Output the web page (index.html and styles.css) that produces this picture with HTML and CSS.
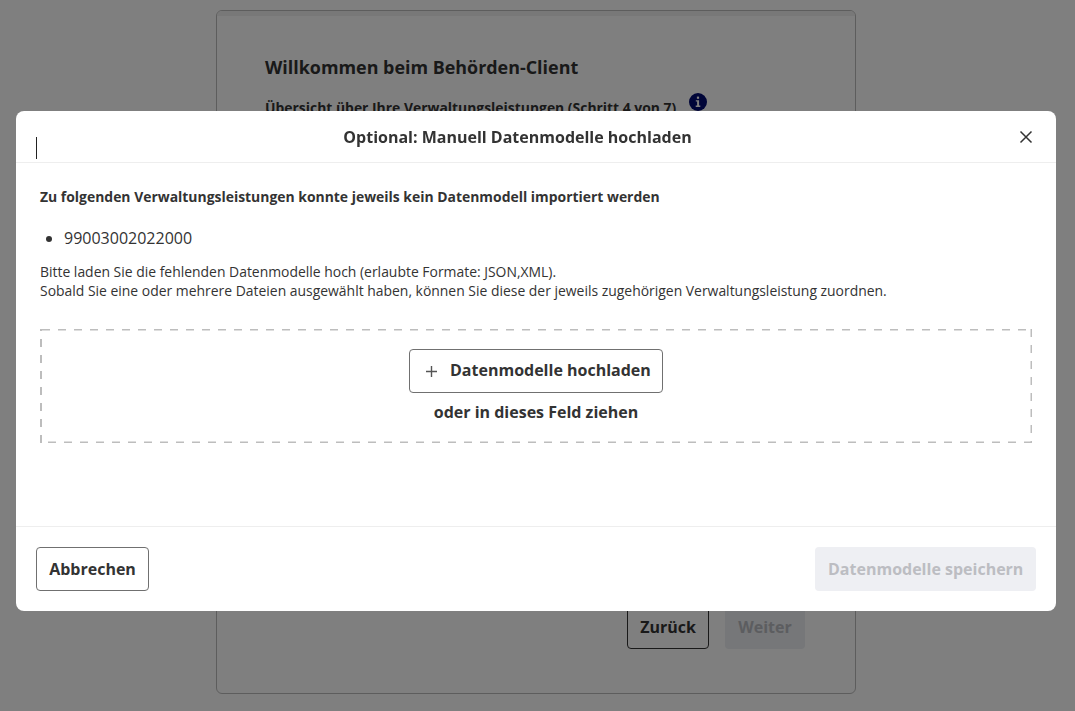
FILE: index.html

```html
<!DOCTYPE html>
<html>
<head>
  <title>Behörden-Client</title>
  <link rel="stylesheet" href="styles.css">
</head>
<body>
  <div class="page">
    <div class="card">
      <div class="card-strip"></div>
      <div class="card-content">
        <h1>Willkommen beim Behörden-Client</h1>
        <div class="step">
          <span>Übersicht über Ihre Verwaltungsleistungen (Schritt 4 von 7)</span>
          <svg class="info-icon" width="18" height="18" viewBox="0 0 18 18">
            <circle cx="9" cy="9" r="9" fill="#000a70"/>
            <rect x="7.9" y="3.6" width="2.2" height="2.2" fill="#fff"/>
            <path d="M6.8 7.2h3.3v5.4h1.2v1.3H6.7v-1.3h1.4V8.5H6.8z" fill="#fff"/>
          </svg>
        </div>
        <div class="card-actions">
          <button class="btn btn-outline">Zurück</button>
          <button class="btn btn-disabled">Weiter</button>
        </div>
      </div>
    </div>
  </div>

  <div class="overlay">
    <div class="modal">
      <div class="modal-header">
        <span class="cursor"></span>
        <h2>Optional: Manuell Datenmodelle hochladen</h2>
        <svg class="close-icon" width="14" height="14" viewBox="0 0 14 14">
          <path d="M1.5 1.5l11 11M12.5 1.5l-11 11" stroke="#333" stroke-width="1.5" fill="none"/>
        </svg>
      </div>
      <div class="modal-body">
        <p class="intro">Zu folgenden Verwaltungsleistungen konnte jeweils kein Datenmodell importiert werden</p>
        <ul class="missing-list">
          <li>99003002022000</li>
        </ul>
        <p class="hint">Bitte laden Sie die fehlenden Datenmodelle hoch (erlaubte Formate: JSON,XML).<br>Sobald Sie eine oder mehrere Dateien ausgewählt haben, können Sie diese der jeweils zugehörigen Verwaltungsleistung zuordnen.</p>
        <div class="dropzone">
          <svg class="dropzone-border" width="992" height="114">
            <path class="dash" d="M2 .75H992"/>
            <path class="dash" d="M991.25 0V114"/>
            <path class="dash" d="M992 113.25H0"/>
            <path class="dash dash-left" d="M1 114V0"/>
          </svg>
          <button class="btn btn-upload">
            <svg class="plus-icon" width="11" height="11" viewBox="0 0 11 11">
              <path d="M5.5 0v11M0 5.5h11" stroke="#555" stroke-width="1.4" fill="none"/>
            </svg>
            Datenmodelle hochladen
          </button>
          <div class="drop-text">oder in dieses Feld ziehen</div>
        </div>
      </div>
      <div class="modal-footer">
        <button class="btn btn-outline-light">Abbrechen</button>
        <button class="btn btn-save">Datenmodelle speichern</button>
      </div>
    </div>
  </div>
</body>
</html>
```

FILE: styles.css

```css
* { box-sizing: border-box; }
html, body { height: 100%; }
body { margin: 0; overflow: hidden; font-family: "Open Sans", sans-serif; color: #333; background: #fff; }
h1, h2, p, ul { margin: 0; }

.page { display: flex; justify-content: center; padding: 10px 3px 0 0; }
.card { width: 640px; height: 684px; border: 1px solid #bbb; border-radius: 6px; overflow: hidden; display: flex; flex-direction: column; }
.card-strip { height: 5px; background: #f0f0f0; }
.card-content { flex: 1; padding: 37px 50px 44px 48px; display: flex; flex-direction: column; }
.card-content h1 { font-size: 17.92px; line-height: 28px; font-weight: 700; }
.step { display: flex; align-items: flex-start; margin-top: 15px; font-size: 13.92px; line-height: 24px; font-weight: 700; }
.info-icon { margin: -3px 0 0 13px; }
.card-actions { margin-top: auto; display: flex; justify-content: flex-end; gap: 16px; }

.btn { height: 44px; padding: 0 12px; border-radius: 4px; border: 1px solid transparent; background: #fff; font-family: inherit; font-size: 16px; font-weight: 700; color: #333; white-space: nowrap; }
.btn-outline { width: 82px; border-color: #333; }
.btn-disabled { width: 80px; background: #eceef2; color: #b9bbc0; }
.btn-outline-light { width: 113px; border-color: #707070; }
.btn-save { width: 221px; background: #eeeff3; color: #bcbdc2; }
.btn-upload { width: 254px; border-color: #707070; display: flex; align-items: center; gap: 13px; padding: 0 0 2px 16px; }
.plus-icon { margin-top: 2px; }

.overlay { position: fixed; inset: 0; background: rgba(0, 0, 0, 0.5); display: flex; justify-content: center; padding: 111px 3px 0 0; }
.modal { width: 1040px; height: 500px; background: #fff; border-radius: 8px; display: flex; flex-direction: column; }

.modal-header { position: relative; height: 52px; border-bottom: 1px solid #eee; display: flex; align-items: center; padding: 0 23px 0 20px; }
.modal-header h2 { flex: 1; text-align: center; font-size: 16px; line-height: 24px; font-weight: 700; }
.cursor { position: absolute; left: 20px; top: 26px; width: 1px; height: 22px; background: #222; }
.close-icon { margin-left: 20px; }

.modal-body { flex: 1; padding: 23px 24px 0; }
.intro { font-size: 13.93px; line-height: 21px; font-weight: 700; }
.missing-list { margin-top: 19px; padding-left: 24px; font-size: 16px; line-height: 24px; }
.hint { margin-top: 12px; font-size: 13.93px; line-height: 19px; }

.dropzone { position: relative; height: 114px; margin-top: 29px; display: flex; flex-direction: column; align-items: center; padding-top: 20px; }
.dropzone-border { position: absolute; left: 0; top: 0; }
.dash { fill: none; stroke: #bdbdbd; stroke-width: 1.5; stroke-dasharray: 8 8; }
.dash-left { stroke-width: 2; }
.drop-text { margin-top: 8px; font-size: 16px; line-height: 22px; font-weight: 700; }

.modal-footer { height: 85px; border-top: 1px solid #eee; display: flex; justify-content: space-between; align-items: flex-start; padding: 20px 20px 0; }
```
